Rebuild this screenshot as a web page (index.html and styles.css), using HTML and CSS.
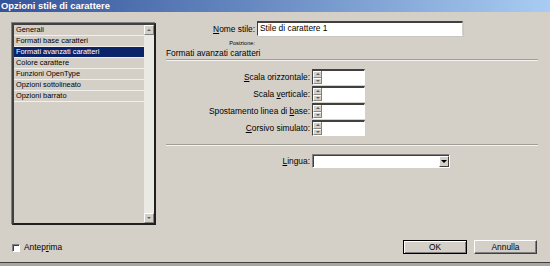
FILE: index.html
```html
<!DOCTYPE html>
<html>
<head>
<meta charset="utf-8">
<link rel="stylesheet" href="styles.css">
</head>
<body>
<div class="window">
  <div class="titlebar">Opzioni stile di carattere</div>
  <div class="content">
    <div class="list">
      <ul class="items">
        <li>Generali</li>
        <li>Formati base caratteri</li>
        <li class="selected">Formati avanzati caratteri</li>
        <li>Colore carattere</li>
        <li>Funzioni OpenType</li>
        <li>Opzioni sottolineato</li>
        <li>Opzioni barrato</li>
      </ul>
      <div class="scrollbar">
        <div class="sb-btn"><span class="tri-up"></span></div>
        <div class="sb-track"></div>
        <div class="sb-btn"><span class="tri-down"></span></div>
      </div>
    </div>
    <div class="panel">
      <div class="name-row">
        <span class="name-label"><u>N</u>ome stile:</span>
        <div class="textbox">Stile di carattere 1</div>
      </div>
      <div class="pos-row"><span class="pos">Posizione:</span></div>
      <div class="section">Formati avanzati caratteri</div>
      <div class="sep sep-top"></div>
      <div class="spins">
        <div class="spin-row">
          <span class="spin-label"><u>S</u>cala orizzontale:</span>
          <div class="spin"><div class="arrows"><div class="arr"><span class="tri-up"></span></div><div class="arr"><span class="tri-down"></span></div></div><div class="field"></div></div>
        </div>
        <div class="spin-row">
          <span class="spin-label">Scala <u>v</u>erticale:</span>
          <div class="spin"><div class="arrows"><div class="arr"><span class="tri-up"></span></div><div class="arr"><span class="tri-down"></span></div></div><div class="field"></div></div>
        </div>
        <div class="spin-row">
          <span class="spin-label">Spostamento linea di <u>b</u>ase:</span>
          <div class="spin"><div class="arrows"><div class="arr"><span class="tri-up"></span></div><div class="arr"><span class="tri-down"></span></div></div><div class="field"></div></div>
        </div>
        <div class="spin-row">
          <span class="spin-label"><u>C</u>orsivo simulato:</span>
          <div class="spin"><div class="arrows"><div class="arr"><span class="tri-up"></span></div><div class="arr"><span class="tri-down"></span></div></div><div class="field"></div></div>
        </div>
      </div>
      <div class="sep sep-bottom"></div>
      <div class="lang-row">
        <span class="spin-label"><u>L</u>ingua:</span>
        <div class="select"><div class="select-field"></div><div class="select-btn"><span class="tri-down-big"></span></div></div>
      </div>
    </div>
  </div>
  <div class="footer">
    <div class="preview">
      <span class="checkbox"></span>
      <span class="preview-label">Antep<u>r</u>ima</span>
    </div>
    <div class="buttons">
      <div class="btn btn-default"><span>OK</span></div>
      <div class="btn"><span>Annulla</span></div>
    </div>
  </div>
  <div class="bottom-strip"></div>
</div>
</body>
</html>
```
FILE: styles.css
```css
* { box-sizing: border-box; }
html, body {
  margin: 0;
  padding: 0;
}
body {
  width: 550px;
  height: 266px;
  overflow: hidden;
  background: #d4d0c8;
  font-family: "Liberation Sans", Arial, sans-serif;
  font-size: 8.4px;
  color: #000;
}
.window {
  width: 550px;
  height: 266px;
  display: flex;
  flex-direction: column;
}
.titlebar {
  height: 12px;
  background: linear-gradient(to right, #34549a 0%, #6688c0 45%, #a8ccf2 100%);
  color: #fff;
  font-weight: bold;
  font-size: 9.4px;
  line-height: 12px;
  padding-left: 1px;
  white-space: nowrap;
}
.content {
  display: flex;
  margin-top: 9px;
  padding: 0 12px;
  height: 204px;
}
.list {
  margin-top: 2px;
  width: 144px;
  height: 202px;
  border: 2px solid #202020;
  border-top-color: #404040;
  border-left-color: #404040;
  box-shadow: -1px -1px 0 #808080;
  display: flex;
}
.items {
  list-style: none;
  margin: 0;
  padding: 0;
  flex: 1;
  font-size: 7.4px;
}
.items li {
  height: 11px;
  line-height: 10px;
  padding-left: 2px;
  border-bottom: 1px solid #f2f0eb;
  white-space: nowrap;
}
.items li.selected {
  background: #0a246a;
  color: #fff;
}
.scrollbar {
  width: 10px;
  display: flex;
  flex-direction: column;
  background: #ebe9e3;
}
.sb-btn {
  height: 10px;
  background: #d4d0c8;
  border-top: 1px solid #fff;
  border-left: 1px solid #fff;
  border-right: 1px solid #808080;
  border-bottom: 1px solid #808080;
  display: flex;
  align-items: center;
  justify-content: center;
}
.sb-track { flex: 1; }
.tri-up {
  width: 0; height: 0;
  border-left: 2px solid transparent;
  border-right: 2px solid transparent;
  border-bottom: 2px solid #606060;
}
.tri-down {
  width: 0; height: 0;
  border-left: 2px solid transparent;
  border-right: 2px solid transparent;
  border-top: 2px solid #606060;
}
.panel {
  margin-left: 10px;
  flex: 1;
  display: flex;
  flex-direction: column;
}
.name-row {
  display: flex;
  align-items: center;
  height: 15px;
}
.name-label {
  width: 89px;
  text-align: right;
  margin-right: 2px;
  white-space: nowrap;
}
.textbox {
  width: 206px;
  height: 15px;
  background: #fff;
  border-top: 2px solid #404040;
  border-left: 1px solid #404040;
  border-right: 1px solid #d4d0c8;
  border-bottom: 1px solid #fff;
  box-shadow: 1px 1px 0 #c8c6c0;
  line-height: 11px;
  padding-left: 2px;
  white-space: nowrap;
}
.pos-row {
  margin-top: 3px;
  height: 8px;
  width: 89px;
  display: flex;
  justify-content: flex-end;
  align-items: center;
  overflow: visible;
}
.pos {
  font-size: 5.6px;
  line-height: 8px;
  white-space: nowrap;
}
.section {
  margin-top: 1px;
  height: 10px;
  line-height: 10px;
  white-space: nowrap;
}
.sep {
  width: 372px;
  height: 2px;
  border-top: 1px solid #a09e98;
  border-bottom: 1px solid #f4f3ef;
}
.sep-top { margin-top: 1px; }
.spins {
  margin-top: 8px;
  display: flex;
  flex-direction: column;
  gap: 1px;
}
.spin-row, .lang-row {
  display: flex;
  align-items: center;
  height: 16px;
}
.spin-label {
  width: 144px;
  margin-right: 2px;
  text-align: right;
  white-space: nowrap;
}
.spin {
  display: flex;
  height: 16px;
  width: 53px;
  border-top: 2px solid #404040;
  border-left: 1px solid #404040;
  border-bottom: 1px solid #fff;
  border-right: 1px solid #fff;
}
.arrows {
  width: 9px;
  display: flex;
  flex-direction: column;
  border-right: 1px solid #808080;
}
.arr {
  flex: 1;
  background: #d4d0c8;
  border-top: 1px solid #fff;
  border-left: 1px solid #fff;
  border-bottom: 1px solid #8a8880;
  display: flex;
  align-items: center;
  justify-content: center;
}
.field {
  flex: 1;
  background: #fff;
}
.sep-bottom { margin-top: 8px; }
.lang-row {
  margin-top: 8px;
  height: 14px;
}
.select {
  width: 138px;
  height: 14px;
  display: flex;
  background: #fff;
  border-top: 1px solid #808080;
  border-left: 1px solid #808080;
  border-right: 1px solid #fff;
  border-bottom: 1px solid #fff;
  box-shadow: inset 1px 1px 0 #404040;
}
.select-field { flex: 1; }
.select-btn {
  width: 10px;
  background: #d4d0c8;
  border-top: 1px solid #fff;
  border-left: 1px solid #fff;
  border-right: 1px solid #404040;
  border-bottom: 1px solid #404040;
  margin: 1px 0 0 0;
  display: flex;
  align-items: center;
  justify-content: center;
}
.tri-down-big {
  width: 0; height: 0;
  border-left: 3px solid transparent;
  border-right: 3px solid transparent;
  border-top: 3px solid #000;
}
.footer {
  margin-top: 15px;
  height: 14px;
  display: flex;
  align-items: center;
  justify-content: space-between;
  padding: 0 13px 0 12px;
}
.preview {
  display: flex;
  align-items: center;
}
.checkbox {
  width: 8px;
  height: 8px;
  background: #fff;
  border-top: 1px solid #808080;
  border-left: 1px solid #808080;
  border-right: 1px solid #fff;
  border-bottom: 1px solid #fff;
  box-shadow: inset 1px 1px 0 #404040;
  margin-top: 1px;
}
.preview-label {
  margin-left: 4px;
}
.buttons {
  display: flex;
  gap: 7px;
}
.btn {
  width: 63px;
  height: 14px;
  background: #d4d0c8;
  border-top: 1px solid #fff;
  border-left: 1px solid #fff;
  border-right: 1px solid #404040;
  border-bottom: 1px solid #404040;
  box-shadow: inset -1px -1px 0 #808080;
  display: flex;
  align-items: center;
  justify-content: center;
  line-height: 10px;
}
.btn-default {
  width: 64px;
  border: 1px solid #000;
  box-shadow: inset 1px 1px 0 #fff, inset -1px -1px 0 #808080;
}
.bottom-strip {
  margin-top: 8px;
  height: 4px;
  border-top: 1px solid #404040;
  background: #a8a6a0;
}
```
